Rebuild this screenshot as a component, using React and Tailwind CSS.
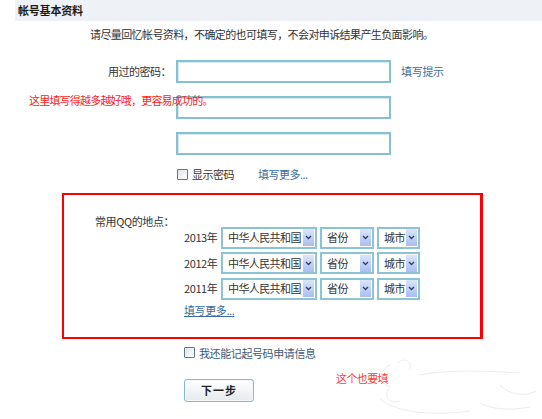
import React from "react";

const font = { fontFamily: '"Noto Sans CJK SC", "Liberation Sans", sans-serif' };

function Input() {
  return (
    <div className="h-[23px] w-[215px] border-2 border-[#86c0d2] bg-white shadow-[inset_1px_1px_0_#d6eaf0]" />
  );
}

function Select({ w, label }) {
  return (
    <div
      className="flex h-[22px] items-center justify-between border-2 border-[#8cc4d4] bg-white pl-[5px] pr-[1px]"
      style={{ width: w }}
    >
      <span className="text-[11px] leading-none text-[#333] tracking-[-0.6px]">{label}</span>
      <div className="flex h-[17px] w-[11px] items-center justify-center bg-gradient-to-b from-[#dbe5fb] to-[#a9bdf0]">
        <svg width="7" height="5" viewBox="0 0 7 5">
          <path d="M1 1 L3.5 3.5 L6 1" fill="none" stroke="#2c3e6e" strokeWidth="1.3" />
        </svg>
      </div>
    </div>
  );
}

function Checkbox() {
  return (
    <div className="h-[11px] w-[11px] rounded-[1px] border border-[#5d7891] bg-gradient-to-br from-[#dfe5ea] to-white" />
  );
}

function YearRow({ year }) {
  return (
    <div className="flex h-[22px] items-center">
      <span className="w-[37px] text-[11px] text-[#333] tracking-[-0.4px]">{year}年</span>
      <div className="flex gap-[3px]">
        <Select w={96} label="中华人民共和国" />
        <Select w={54} label="省份" />
        <Select w={43} label="城市" />
      </div>
    </div>
  );
}

export default function App() {
  return (
    <div className="relative h-[419px] w-[542px] overflow-hidden bg-white" style={font}>
      <div className="ml-[15px] flex h-[21px] items-center bg-[#eef2f6] pl-[3px]">
        <span className="text-[11px] font-bold text-[#1a1a1a] tracking-[-0.2px]">帐号基本资料</span>
      </div>

      <div className="ml-[90px] mt-[6px] text-[11px] leading-[14px] text-[#333] tracking-[-0.6px]">
        请尽量回忆帐号资料，不确定的也可填写，不会对申诉结果产生负面影响。
      </div>

      <div className="mt-[19px] flex items-center">
        <div className="w-[176px] pr-[5px] text-right text-[11px] text-[#333] tracking-[-0.5px]">用过的密码：</div>
        <Input />
        <span className="ml-[10px] text-[11px] text-[#3b6b9c] tracking-[-0.3px]">填写提示</span>
      </div>
      <div className="ml-[176px] mt-[13px]">
        <Input />
      </div>
      <div className="ml-[176px] mt-[13px]">
        <Input />
      </div>

      <div className="ml-[177px] mt-[11px] flex items-center">
        <Checkbox />
        <span className="ml-[4px] text-[11px] text-[#333] tracking-[-0.5px]">显示密码</span>
        <span className="ml-[24px] text-[11px] text-[#3b6b9c] tracking-[-0.5px]">填写更多...</span>
      </div>

      <div className="ml-[62px] mt-[10px] h-[146px] w-[421px] border-2 border-r-[3px] border-[#ff0000] pt-[19px]">
        <div className="ml-[31px] text-[11px] leading-[14px] text-[#333] tracking-[-0.4px]">常用QQ的地点：</div>
        <div className="ml-[120px] mt-[-1px] flex flex-col gap-[3.5px]">
          <YearRow year="2013" />
          <YearRow year="2012" />
          <YearRow year="2011" />
        </div>
        <div className="ml-[120px] mt-[3px] text-[11px] leading-[14px] text-[#3b6b9c] underline tracking-[-0.4px]">填写更多...</div>
      </div>

      <div className="ml-[184px] mt-[6px] flex items-center">
        <Checkbox />
        <span className="ml-[4px] text-[11px] text-[#3d5a78] tracking-[-0.4px]">我还能记起号码申请信息</span>
      </div>

      <div className="ml-[184px] mt-[18px] flex h-[23px] w-[70px] items-center justify-center rounded-[3px] border border-[#7eb9de] bg-gradient-to-b from-white to-[#e6eaee] shadow-[inset_0_0_0_1px_#f4f8fb]">
        <span className="text-[11px] font-bold text-[#222] tracking-[1px]">下一步</span>
      </div>

      <div className="absolute left-[29px] top-[92px] text-[11px] leading-[16px] text-[#ff1a1a] tracking-[-0.8px]">
        这里填写得越多越好哦，更容易成功的。
      </div>
      <div className="absolute left-[336px] top-[370px] text-[11px] leading-[16px] text-[#ff3b3b] tracking-[-0.6px]">
        这个也要填
      </div>

      <svg className="absolute left-[360px] top-[355px]" width="182" height="64" viewBox="0 0 182 64">
        <g fill="none" stroke="#ececec" strokeWidth="1">
          <path d="M30 10 C20 14 18 28 30 32 C22 40 30 50 40 46" />
          <path d="M38 8 C44 2 52 6 50 14" />
          <path d="M60 20 C90 14 130 16 160 18" />
          <path d="M20 44 C40 60 80 60 110 56" />
          <path d="M140 30 C150 40 165 42 176 36" />
          <path d="M120 48 C130 54 150 56 170 52" />
        </g>
      </svg>
    </div>
  );
}
